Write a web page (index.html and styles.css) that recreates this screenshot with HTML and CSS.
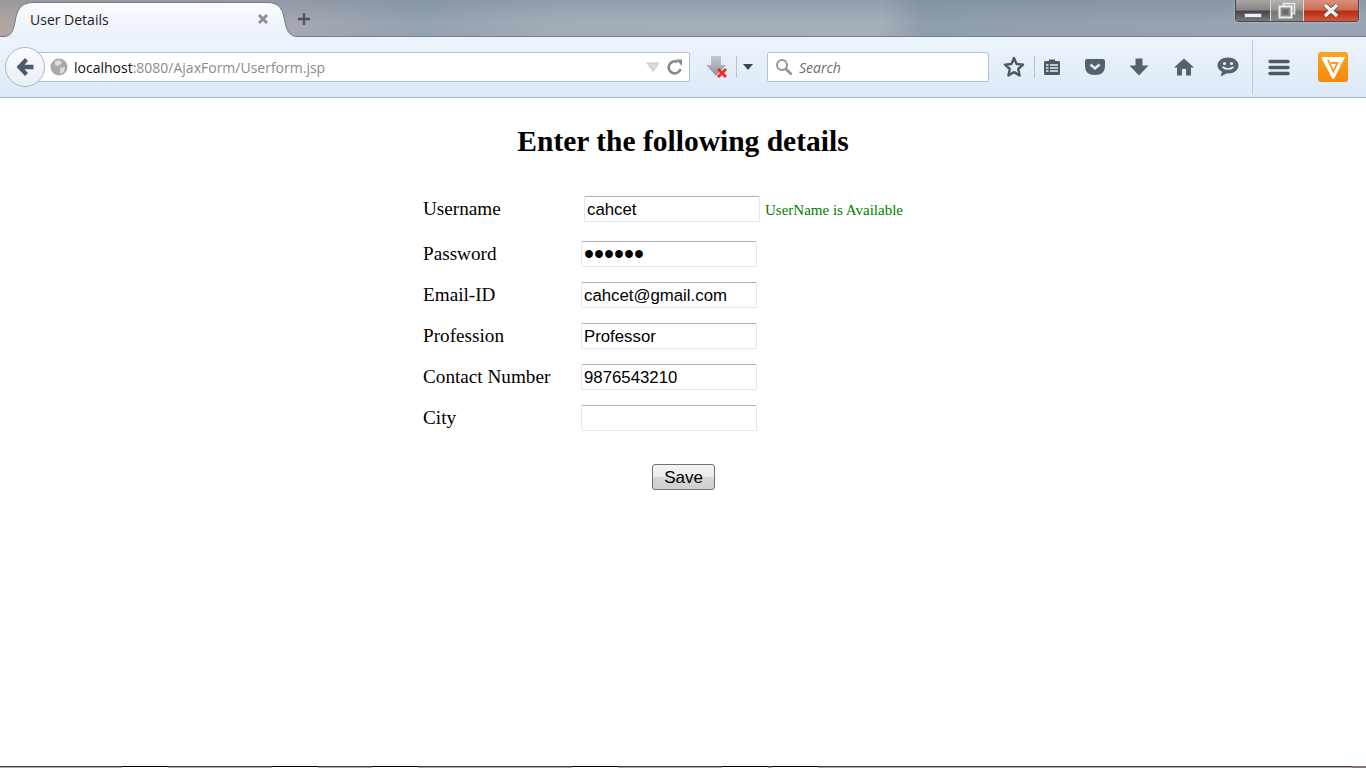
FILE: index.html
```html
<!DOCTYPE html>
<html lang="en">
<head>
  <meta charset="UTF-8" />
  <title>User Details</title>
  <link rel="stylesheet" href="styles.css">
</head>
<body>

  <div class="tabstrip">
    <div class="tab">
      <svg class="tab-bg" width="293" height="38" viewBox="0 0 293 38">
        <defs>
          <linearGradient id="tabFill" x1="0" y1="0" x2="0" y2="1">
            <stop offset="0" stop-color="#fafcfe"/>
            <stop offset="1" stop-color="#e9f1fa"/>
          </linearGradient>
        </defs>
        <path d="M0 36.500 C7 36 9 32 11 22 C13 10 16 2.500 30 2.500 L263 2.500 C276 2.500 279 10 281 22 C283 32 286 36 293 36.500 V38 H0 Z" fill="url(#tabFill)"/>
        <path d="M0 36.500 C7 36 9 32 11 22 C13 10 16 2.500 30 2.500 L263 2.500 C276 2.500 279 10 281 22 C283 32 286 36 293 36.500" fill="none" stroke="#6f7a88"/>
      </svg>
      <span class="tab-title">User Details</span>
      <svg class="tab-close" width="12" height="12" viewBox="0 0 12 12"><path d="M2 2 L10 10 M10 2 L2 10" stroke="#8b9097" stroke-width="3"/></svg>
    </div>
    <svg class="new-tab" width="14" height="14" viewBox="0 0 14 14"><path d="M7 1 V13 M1 7 H13" stroke="#4d5763" stroke-width="2.400"/></svg>
    <div class="winctl">
      <div class="winbtn min"><span class="min-bar"></span></div>
      <div class="winbtn max">
        <svg width="20" height="17" viewBox="0 0 20 17"><path d="M6.500 1.500 H17.500 V11.500 H14.500 V4.500 H6.500 Z" fill="none" stroke="#e8ecf0" stroke-width="1.600"/><rect x="2.500" y="4.500" width="12" height="11" fill="#8e8a86" stroke="#e8ecf0" stroke-width="2"/><rect x="5.500" y="7.500" width="6" height="5" fill="#6c6865"/></svg>
      </div>
      <div class="winbtn close">
        <svg width="18" height="15" viewBox="0 0 18 15"><path d="M3 2 L15 13 M15 2 L3 13" stroke="#55504f" stroke-width="5"/><path d="M3 2 L15 13 M15 2 L3 13" stroke="#f2f2f2" stroke-width="3.400"/></svg>
      </div>
    </div>
  </div>

  <div class="toolbar">
    <div class="back">
      <svg width="20" height="20" viewBox="0 0 20 20"><path d="M10 1 L1.500 10 L10 19 L13 16 L9.500 12.300 H18.500 V7.700 H9.500 L13 4 Z" fill="#4c5b6b"/></svg>
    </div>
    <div class="urlbar">
      <svg class="globe" width="18" height="18" viewBox="0 0 18 18"><circle cx="9" cy="9" r="8.500" fill="#a9a9a9"/><path d="M5 3 L10 2 L12 5 L8 8 L5 7 Z M10 10 L15 9 L14 14 L10 16 Z" fill="#dcdcdc"/></svg>
      <span class="url"><span class="host">localhost</span>:8080/AjaxForm/Userform.jsp</span>
      <svg class="drop" width="14" height="10" viewBox="0 0 14 10"><path d="M1 1 H13 L7 9.500 Z" fill="#d5dbe2" stroke="#c2c9d2"/></svg>
      <svg class="reload" width="16" height="16" viewBox="0 0 16 16"><path d="M13.500 10 A6 6 0 1 1 10.500 3" fill="none" stroke="#7f8a96" stroke-width="2.600"/><path d="M9 0.500 L15 0.500 L15 7 Z" fill="#7f8a96"/></svg>
    </div>
    <div class="addon">
      <svg width="24" height="24" viewBox="0 0 24 24">
        <defs>
          <linearGradient id="arrowFill" x1="0" y1="0" x2="0" y2="1">
            <stop offset="0" stop-color="#c4c8cd"/>
            <stop offset="1" stop-color="#8f959c"/>
          </linearGradient>
        </defs>
        <path d="M6 1 H16 V10 H21 L11 21 L1 10 H6 Z" fill="url(#arrowFill)"/>
        <path d="M13 14 L21 22 M21 14 L13 22" stroke="#ef2b2b" stroke-width="3"/>
      </svg>
      <span class="vline"></span>
      <svg class="addon-arrow" width="10" height="6" viewBox="0 0 10 6"><path d="M0 0 H10 L5 6 Z" fill="#39434e"/></svg>
    </div>
    <div class="searchbar">
      <svg width="18" height="18" viewBox="0 0 18 18"><circle cx="7" cy="7" r="5" fill="none" stroke="#8f959c" stroke-width="2"/><path d="M10.500 10.500 L16.500 16.500" stroke="#8f959c" stroke-width="2.600"/></svg>
      <span class="search-text">Search</span>
    </div>
    <div class="icons">
      <svg class="ic star" width="22" height="22" viewBox="0 0 22 22"><path d="M11 2 L13.600 8 L20 8.600 L15.200 13 L16.600 19.500 L11 16.100 L5.400 19.500 L6.800 13 L2 8.600 L8.400 8 Z" fill="none" stroke="#4c5966" stroke-width="2.400" stroke-linejoin="round"/></svg>
      <span class="vline light"></span>
      <svg class="ic list" width="18" height="18" viewBox="0 0 18 18"><path d="M2.500 3 H6 V1.500 H12 V3 H15.500 Q17 3 17 4.500 V15.500 Q17 17 15.500 17 H2.500 Q1 17 1 15.500 V4.500 Q1 3 2.500 3 Z" fill="#4c5966"/><path d="M3 7 H5.500 M7 7 H15 M3 10 H5.500 M7 10 H15 M3 13 H5.500 M7 13 H15" stroke="#e4edf8" stroke-width="1.300"/></svg>
      <svg class="ic pocket" width="20" height="18" viewBox="0 0 20 18"><path d="M2 1 H18 Q20 1 20 3 V8 Q20 17 10 17 Q0 17 0 8 V3 Q0 1 2 1 Z" fill="#55616e"/><path d="M5.500 6.500 L10 10.500 L14.500 6.500" fill="none" stroke="#e4edf8" stroke-width="2.400"/></svg>
      <svg class="ic down" width="20" height="18" viewBox="0 0 20 18"><path d="M6.500 0.500 H13.500 V7.500 H19.500 L10 17.500 L0.500 7.500 H6.500 Z" fill="#55616e"/></svg>
      <svg class="ic home" width="20" height="18" viewBox="0 0 20 18"><path d="M10 0.500 L20 9.500 H17 V17.500 H12 V11 H8 V17.500 H3 V9.500 H0 Z" fill="#55616e"/></svg>
      <svg class="ic chat" width="22" height="20" viewBox="0 0 22 20"><path d="M11 0.500 C17 0.500 21.500 4 21.500 8.500 C21.500 13 17 16.500 11 16.500 L9.500 16.500 L3.500 19.500 L5 14.800 C2.200 13.300 0.500 11 0.500 8.500 C0.500 4 5 0.500 11 0.500 Z" fill="#55616e"/><circle cx="7.500" cy="6.500" r="1.600" fill="#e4edf8"/><circle cx="14.500" cy="6.500" r="1.600" fill="#e4edf8"/><path d="M5.500 10 Q11 14 16.500 10" fill="none" stroke="#e4edf8" stroke-width="1.600"/></svg>
      <span class="vline tall"></span>
      <svg class="ic menu" width="22" height="17" viewBox="0 0 22 17"><path d="M2 2.500 H20 M2 8.500 H20 M2 14.500 H20" stroke="#4c5966" stroke-width="3.400" stroke-linecap="round"/></svg>
      <svg class="ic vee" width="30" height="30" viewBox="0 0 30 30">
        <defs>
          <linearGradient id="veeFill" x1="0" y1="0" x2="0" y2="1">
            <stop offset="0" stop-color="#f9a51c"/>
            <stop offset="1" stop-color="#f58a0b"/>
          </linearGradient>
        </defs>
        <rect width="30" height="30" rx="3" fill="url(#veeFill)"/>
        <path d="M3 5 H27 L16 27 H14.500 Z M9 7.500 L15.300 21.500 L20.800 10 H12.500 L13.500 12 H18 L15.300 17.500 L11 7.500 Z" fill="#fff" fill-rule="evenodd"/>
      </svg>
    </div>
  </div>

  <div class="page">
    <h1>Enter the following details</h1>
    <form class="userform">
      <div class="row">
        <label for="username">Username</label>
        <input class="shifted" type="text" id="username" value="cahcet">
        <span class="avail">UserName is Available</span>
      </div>
      <div class="row">
        <label for="password">Password</label>
        <input class="pass" type="password" id="password" value="cahcet">
      </div>
      <div class="row">
        <label for="email">Email-ID</label>
        <input type="text" id="email" value="cahcet@gmail.com">
      </div>
      <div class="row">
        <label for="profession">Profession</label>
        <input type="text" id="profession" value="Professor">
      </div>
      <div class="row">
        <label for="contact">Contact Number</label>
        <input type="text" id="contact" value="9876543210">
      </div>
      <div class="row">
        <label for="city">City</label>
        <input type="text" id="city">
      </div>
      <button type="button">Save</button>
    </form>
  </div>

  <div class="taskbar">
    <span class="seg s1"></span>
    <span class="seg s2"></span>
    <span class="seg s3"></span>
    <span class="seg s4"></span>
    <span class="seg s5"></span>
    <span class="seg s6"></span>
    <span class="tray"></span>
  </div>

</body>
</html>
```

FILE: styles.css
```css
* {
  box-sizing: border-box;
}
html, body {
  margin: 0;
  height: 768px;
  overflow: hidden;
}
body {
  display: flex;
  flex-direction: column;
  background-color: white;
  font-family: "Liberation Serif", serif;
}

/* window title / tabs */
.tabstrip {
  height: 37px;
  display: flex;
  align-items: flex-start;
  padding-left: 4px;
  border-bottom: 1px solid #6f7f92;
  background:
    linear-gradient(rgba(110,125,145,0.35), rgba(110,125,145,0) 22px),
    linear-gradient(90deg, #b3a5a1 0, #a6a7ae 40px, #a4a8b2 300px, #94a1ae 420px, #a3adb8 560px, #a5afba 880px, #909daa 920px, #9aa5b3 1366px);
}
.tab {
  position: relative;
  width: 293px;
  height: 38px;
  flex: none;
  padding: 0 0 0 26px;
  display: flex;
  align-items: center;
}
.tab-bg {
  position: absolute;
  left: 0;
  top: 0;
}
.tab-title {
  position: relative;
  font-family: "Open Sans", "Noto Sans", sans-serif;
  font-size: 14px;
  color: #222;
  flex: 1;
}
.tab-close {
  position: relative;
  margin-right: 28px;
}
.new-tab {
  margin: 12px 0 0 0;
}
.winctl {
  margin-left: auto;
  margin-right: 7px;
  width: 124px;
  height: 22px;
  display: flex;
  border: 1px solid #4a4650;
  border-top: none;
  border-radius: 0 0 4px 4px;
  overflow: hidden;
  box-shadow: 0 0 2px rgba(255,255,255,0.6);
}
.winbtn {
  height: 100%;
  display: flex;
  align-items: center;
  justify-content: center;
}
.min {
  width: 35px;
  background: linear-gradient(#a8a5a3 0, #8c8886 45%, #4a454c 55%, #7b787c 100%);
  border-right: 1px solid #d8d8d8;
  align-items: flex-end;
  padding-bottom: 3px;
}
.min-bar {
  width: 18px;
  height: 5px;
  background-color: #eef0f2;
  border: 1px solid #77747a;
}
.max {
  width: 33px;
  background: linear-gradient(#b4b1ae 0, #98948f 45%, #7a7672 55%, #8b8986 100%);
  border-right: 1px solid #d8d8d8;
}
.close {
  flex: 1;
  background: linear-gradient(#d98f7e 0, #cc6f59 45%, #b92c12 55%, #d2583c 100%);
}

/* nav bar */
.toolbar {
  height: 61px;
  flex: none;
  display: flex;
  align-items: center;
  padding-left: 5px;
  background: linear-gradient(#edf4fc, #dde9f6);
  border-bottom: 1px solid #a9bbd0;
}
.back {
  width: 40px;
  height: 40px;
  flex: none;
  position: relative;
  z-index: 1;
  display: flex;
  align-items: center;
  justify-content: center;
  border-radius: 50%;
  border: 1px solid #a9b8c9;
  background: linear-gradient(#fbfdff, #e8eff7);
}
.urlbar {
  width: 652px;
  height: 30px;
  margin-left: -7px;
  padding-left: 11px;
  display: flex;
  align-items: center;
  background-color: white;
  border: 1px solid #b2c2d4;
  border-radius: 0 2px 2px 0;
}
.globe {
  flex: none;
}
.url {
  flex: 1;
  margin-left: 6px;
  font-family: "Open Sans", "Noto Sans", sans-serif;
  font-size: 14px;
  color: #8c8c8c;
}
.host {
  color: #111;
}
.drop {
  margin-right: 7px;
}
.reload {
  margin-right: 6px;
}
.addon {
  width: 77px;
  flex: none;
  padding-left: 15px;
  display: flex;
  align-items: center;
}
.vline {
  width: 1px;
  height: 22px;
  margin: 0 6px 0 7px;
  background-color: #b8c4d2;
}
.addon-arrow {
  flex: none;
}
.searchbar {
  width: 222px;
  height: 30px;
  flex: none;
  padding-left: 7px;
  display: flex;
  align-items: center;
  gap: 6px;
  background-color: white;
  border: 1px solid #b2c2d4;
  border-radius: 2px;
}
.search-text {
  font-family: "Open Sans", "Noto Sans", sans-serif;
  font-style: italic;
  font-size: 14px;
  color: #6d6d6d;
}
.icons {
  flex: 1;
  display: flex;
  align-items: center;
  height: 100%;
}
.ic {
  flex: none;
}
.star {
  margin-left: 14px;
}
.vline.light {
  height: 22px;
  margin: 0 0 0 9px;
  background-color: #b4c2d2;
}
.list {
  margin-left: 8px;
}
.pocket {
  margin-left: 24px;
}
.down {
  margin-left: 24px;
}
.home {
  margin-left: 25px;
}
.chat {
  margin-left: 23px;
}
.vline.tall {
  height: 54px;
  margin: 0 0 0 13px;
  background-color: #bccadb;
}
.menu {
  margin-left: 15px;
}
.vee {
  margin-left: 28px;
}

/* form page */
.page {
  flex: 1;
  min-height: 0;
}
h1 {
  margin: 26px 0 0;
  text-align: center;
  font-size: 29.5px;
  line-height: 34px;
  font-weight: bold;
  color: black;
}
.userform {
  width: 520px;
  margin: 38px auto 0;
}
.row {
  height: 26px;
  display: flex;
  align-items: center;
  margin-bottom: 15px;
}
.row:first-child {
  margin-bottom: 19px;
}
label {
  width: 158px;
  flex: none;
  font-size: 19.2px;
  color: black;
}
input {
  width: 176px;
  height: 26px;
  padding: 1px 2px 0;
  flex: none;
  font-family: "Liberation Sans", Arial, sans-serif;
  font-size: 16.8px;
  color: black;
  background-color: white;
  border: 1px solid #e3e6ee;
  border-top-color: #aeaeb4;
  border-radius: 2px;
}
input.shifted {
  margin-left: 3px;
}
input.pass {
  font-size: 28.6px;
  padding-top: 0;
}
.avail {
  margin-left: 5px;
  padding-top: 2px;
  font-size: 15px;
  color: green;
}
button {
  display: block;
  width: 63px;
  height: 26px;
  margin: 33px 0 0 229px;
  padding: 2px 0 0;
  font-family: "Liberation Sans", Arial, sans-serif;
  font-size: 17px;
  color: black;
  background: linear-gradient(#f4f4f4, #ececec 50%, #d6d6d6 52%, #cfcfcf);
  border: 1px solid #707070;
  border-radius: 3px;
}

/* bit of the desktop taskbar under the window */
.taskbar {
  height: 2px;
  flex: none;
  display: flex;
  background: linear-gradient(#4a4040 50%, #b5a59f 50%);
}
.seg {
  width: 46px;
  background: linear-gradient(#000 50%, #fff 50%);
}
.s1 { margin-left: 122px; }
.s2 { margin-left: 104px; }
.s3 { margin-left: 54px; }
.s4 { margin-left: 154px; }
.s5 { margin-left: 104px; }
.s6 { margin-left: 4px; }
.tray {
  width: 14px;
  margin-left: auto;
  background-color: #857670;
}
```
